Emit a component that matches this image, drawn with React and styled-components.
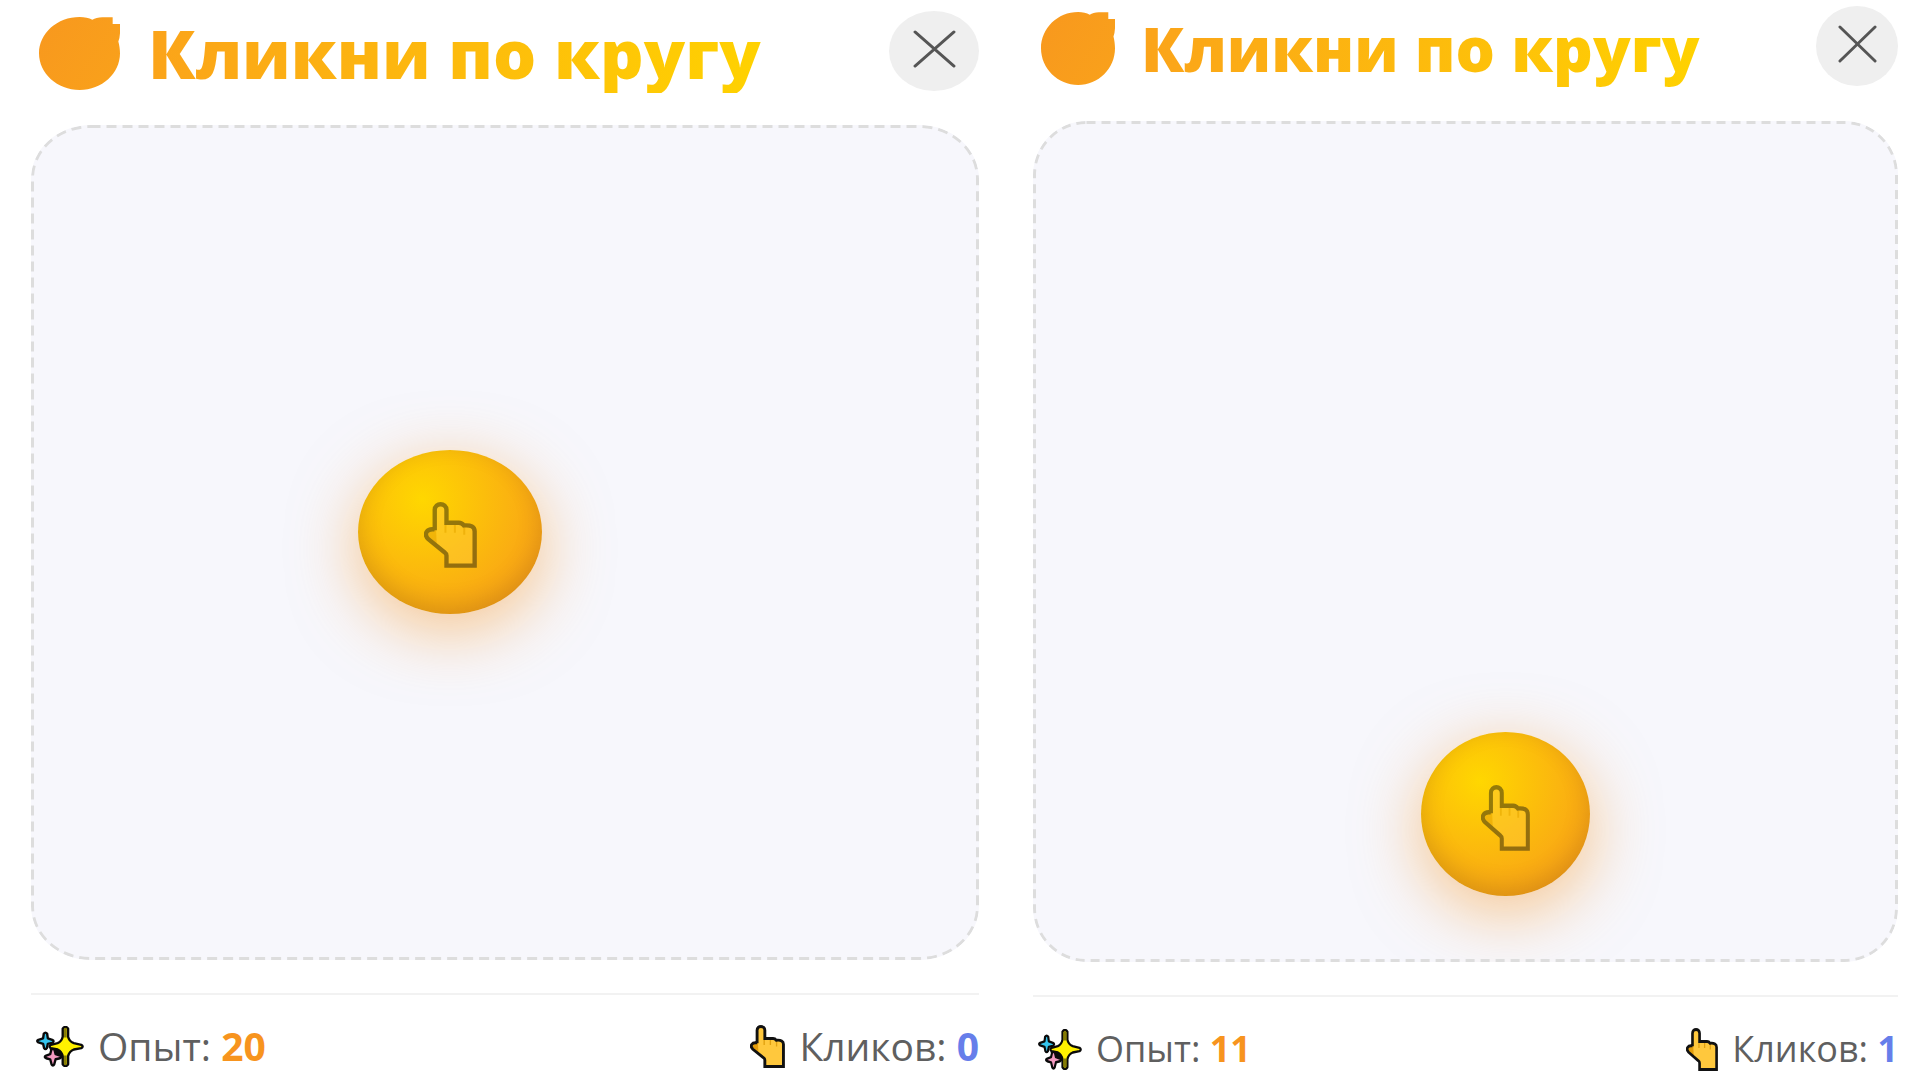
import React, { useState } from "react";
import styled, { createGlobalStyle } from "styled-components";

const GlobalStyle = createGlobalStyle`
  *, *::before, *::after { box-sizing: border-box; }
  body {
    margin: 0;
    background: #ffffff;
    font-family: "Open Sans", "Noto Sans", sans-serif;
  }
`;

const Page = styled.main`
  display: grid;
  grid-template-columns: 948fr 865fr;
  gap: 54px;
  min-height: 100vh;
  padding: 0 22px 0 31px;
`;

const Panel = styled.section`
  display: flex;
  flex-direction: column;
  min-width: 0;
  padding-top: ${(p) => (p.$wide ? 11 : 6)}px;
`;

const Header = styled.header`
  display: flex;
  align-items: center;
  justify-content: space-between;
  height: 80px;
  padding-left: 8px;
`;

const Brand = styled.div`
  display: flex;
  align-items: center;
  gap: ${(p) => (p.$wide ? 28 : 26)}px;
  padding-top: 4px;
`;

const Orange = styled.svg`
  flex: none;
  width: ${(p) => (p.$wide ? 81 : 74)}px;
  height: 73px;
`;

const Title = styled.h1`
  margin: 0;
  font-size: ${(p) => (p.$wide ? 68 : 62)}px;
  line-height: 80px;
  font-weight: 800;
  white-space: nowrap;
  color: transparent;
  background: linear-gradient(100deg, #fba31a, #ffd200);
  background-clip: text;
  -webkit-background-clip: text;
`;

const CloseButton = styled.button`
  display: grid;
  place-items: center;
  flex: none;
  width: ${(p) => (p.$wide ? 90 : 82)}px;
  height: 80px;
  padding: 0 0 4px;
  border: 0;
  border-radius: 50%;
  background: #efefef;
  cursor: pointer;
`;

const Cross = styled.svg`
  width: ${(p) => (p.$wide ? 43 : 39)}px;
  height: 38px;
`;

const PlayArea = styled.div`
  position: relative;
  flex: 1;
  margin: ${(p) => (p.$wide ? 34 : 35)}px 0 33px;
  border-radius: ${(p) => (p.$wide ? "60px / 54px" : "54px")};
  background: #f7f7fc;
  overflow: hidden;
`;

const Dashes = styled.svg`
  position: absolute;
  inset: 0;
  width: 100%;
  height: 100%;
  pointer-events: none;

  rect {
    width: calc(100% - 3px);
    height: calc(100% - 3px);
    fill: none;
    stroke: #dddddd;
    stroke-width: 3px;
    stroke-dasharray: ${(p) => (p.$wide ? "10 6" : "9 6")};
  }
`;

const Target = styled.button`
  position: absolute;
  display: grid;
  place-items: center;
  width: ${(p) => (p.$wide ? 184 : 169)}px;
  height: 164px;
  padding: 7px 0 0;
  border: 0;
  border-radius: 50%;
  background: radial-gradient(circle at 35% 30%, #ffd700, #f7931e);
  box-shadow: 0 16px 66px rgba(247, 147, 30, 0.5),
    inset 0 -8px 24px rgba(0, 0, 0, 0.13);
  cursor: pointer;
`;

const TargetHand = styled.svg`
  width: ${(p) => (p.$wide ? 53 : 49)}px;
  height: 66px;
  opacity: 0.44;
`;

const Footer = styled.footer`
  display: flex;
  justify-content: space-between;
  height: ${(p) => (p.$wide ? 87 : 85)}px;
  padding: ${(p) => (p.$wide ? 9 : 10)}px 0 0 5px;
  border-top: 2px solid #f2f2f2;
`;

const Stat = styled.p`
  display: flex;
  align-items: center;
  margin: 0;
  height: 84px;
  font-size: ${(p) => (p.$wide ? 39 : 36)}px;
  line-height: 84px;
  color: #5f5f5f;
  white-space: pre;
`;

const Value = styled.strong`
  font-weight: 700;
  color: ${(p) => p.$color};
`;

const Sparkles = styled.svg`
  width: ${(p) => (p.$wide ? 48 : 44)}px;
  height: 41px;
  margin-right: 14px;
`;

const StatHand = styled.svg`
  width: ${(p) => (p.$wide ? 35 : 32)}px;
  height: 43px;
  margin-right: 14px;
`;

function HandShape() {
  const outline =
    "M32 84V24C32 1 67 1 67 24V62H104C112 62 116 66 119 70C140 68 151 74 151 88V190H67V160C67 154 64 152 60 149L13 111C-2 96 8 78 32 82Z";
  return (
    <>
      <path d={outline} fill="#ffc83d" />
      <path d="M36 83C12 80 4 96 17 110L38 127Z" fill="#e39d0b" />
      <path d="M64 68V92M92 68V92M120 72V98" stroke="#e0a010" strokeWidth="6" fill="none" />
      <path d={outline} fill="none" stroke="#111" strokeWidth="13" />
    </>
  );
}

const handView = { viewBox: "0 0 158 197", preserveAspectRatio: "none", "aria-hidden": true };

function SparklesIcon({ wide }) {
  return (
    <Sparkles $wide={wide} viewBox="0 0 142 122" preserveAspectRatio="none" aria-hidden="true">
      <path d="M55 62L90 62L86 92L58 84L40 70Z" fill="#0a0a0a" />
      <g stroke="#0a0a0a" strokeWidth="7" strokeLinejoin="round">
        <path d="M23 23Q28 16 33 23L35 37L48 41Q56 45 48 50L35 53L32 66Q28 72 24 66L21 53L7 49Q0 45 7 41L21 37Z" fill="#35c5ee" />
        <path d="M45 72Q50 64 55 72L58 84L71 88Q78 92 71 96L58 99L54 114Q50 121 46 114L42 99L30 96Q22 92 30 88L42 84Z" fill="#f39ac0" />
        <path d="M79 8Q87-3 95 8V32Q98 46 112 51L134 56Q142 61 134 66L112 70Q98 76 95 90V114Q87 125 79 114V90Q76 76 64 70L44 66Q36 61 44 56L64 51Q76 46 79 32Z" fill="#fff100" />
      </g>
      <path d="M83 8Q87 3 91 8V34H83ZM83 88H91V114Q87 119 83 114Z" fill="#857b05" />
    </Sparkles>
  );
}

function OrangeIcon({ wide }) {
  const id = wide ? "orange-wide" : "orange-narrow";
  return (
    <Orange $wide={wide} viewBox="0 0 243 217" preserveAspectRatio="none" aria-hidden="true">
      <defs>
        <linearGradient id={id} x1="0" y1="0" x2="1" y2="0.6">
          <stop offset="0" stopColor="#f8981e" />
          <stop offset="1" stopColor="#f9a01b" />
        </linearGradient>
      </defs>
      <path
        d="M122 0C137 0 150 3 160 8C168 4 177 1 190 1H221V21H243V48Q242 64 238 73C241 84 243 96 243 108C243 168 189 217 122 217S0 168 0 108S55 0 122 0Z"
        fill={`url(#${id})`}
      />
    </Orange>
  );
}

function Game({ wide, xp, clicks: initialClicks, start }) {
  const [open, setOpen] = useState(true);
  const [clicks, setClicks] = useState(initialClicks);
  const [spot, setSpot] = useState(start);

  const hit = () => {
    setClicks(clicks + 1);
    setSpot({ left: Math.random() * 75, top: Math.random() * 75 });
  };

  if (!open) return <Panel $wide={wide} />;

  return (
    <Panel $wide={wide}>
      <Header>
        <Brand $wide={wide}>
          <OrangeIcon wide={wide} />
          <Title $wide={wide}>Кликни по кругу</Title>
        </Brand>
        <CloseButton $wide={wide} type="button" aria-label="Закрыть" onClick={() => setOpen(false)}>
          <Cross $wide={wide} viewBox="0 0 40 38" preserveAspectRatio="none" aria-hidden="true">
            <path d="M2 2L38 36M38 2L2 36" stroke="#555" strokeWidth="3" strokeLinecap="round" />
          </Cross>
        </CloseButton>
      </Header>
      <PlayArea $wide={wide}>
        <Target
          $wide={wide}
          type="button"
          aria-label="Круг"
          onClick={hit}
          style={{ left: `${spot.left}%`, top: `${spot.top}%` }}
        >
          <TargetHand $wide={wide} {...handView}>
            <HandShape />
          </TargetHand>
        </Target>
        <Dashes $wide={wide} aria-hidden="true">
          <rect x="1.5" y="1.5" rx={wide ? 58 : 52} ry="52" />
        </Dashes>
      </PlayArea>
      <Footer $wide={wide}>
        <Stat $wide={wide}>
          <SparklesIcon wide={wide} />
          Опыт: <Value $color="#f7941e">{xp}</Value>
        </Stat>
        <Stat $wide={wide}>
          <StatHand $wide={wide} {...handView}>
            <HandShape />
          </StatHand>
          Кликов: <Value $color="#667eea">{clicks}</Value>
        </Stat>
      </Footer>
    </Panel>
  );
}

export default function App() {
  return (
    <>
      <GlobalStyle />
      <Page>
        <Game wide xp={20} clicks={0} start={{ left: 34.5, top: 38.9 }} />
        <Game xp={11} clicks={1} start={{ left: 44.9, top: 72.7 }} />
      </Page>
    </>
  );
}
